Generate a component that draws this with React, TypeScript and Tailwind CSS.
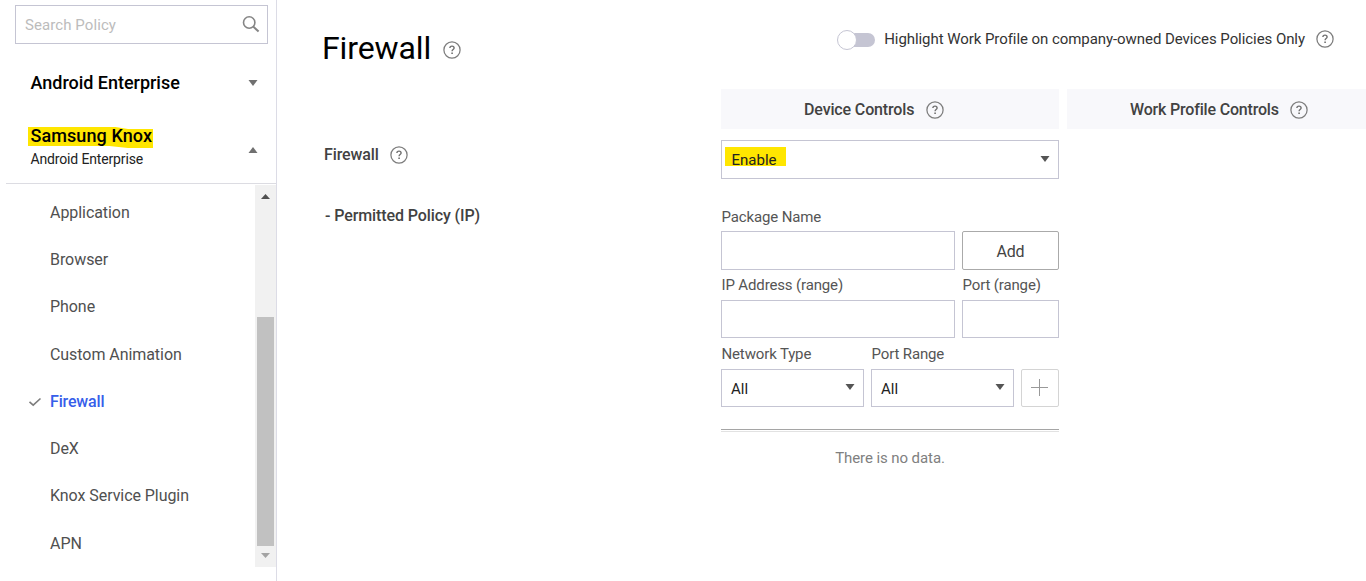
import React from 'react';

function HelpIcon() {
  return (
    <svg className="block shrink-0" width="18" height="18" viewBox="0 0 18 18" fill="none">
      <circle cx="9" cy="9" r="8.1" stroke="#7d7d7d" strokeWidth="1.25" />
      <path d="M6.9 7.1C6.9 5.8 7.7 5.1 9 5.1s2.1.8 2.1 1.9c0 1.5-2 1.6-2 3.2" stroke="#707070" strokeWidth="1.4" />
      <path d="M8.3 11.5h1.6V13H8.3z" fill="#707070" />
    </svg>
  );
}

function Arrow({ up = false, color = '#555' }: { up?: boolean; color?: string }) {
  return (
    <svg className="block shrink-0" width="10" height="6" viewBox="0 0 10 6">
      <path d={up ? 'M5 0L9.5 6H.5z' : 'M.5 0h9L5 6z'} fill={color} />
    </svg>
  );
}

const items = ['Application', 'Browser', 'Phone', 'Custom Animation', 'Firewall', 'DeX', 'Knox Service Plugin', 'APN'];

function Sidebar() {
  return (
    <aside className="flex h-full w-[277px] shrink-0 flex-col border-r border-[#dcdce6]">
      <div className="ml-[15px] mt-[5px] flex h-[39px] w-[253px] items-center justify-between border border-[#c5c5d3] pl-[9px] pr-[7px]">
        <span className="text-[15px] leading-5 tracking-[0.08px] text-[#bcbcbc]">Search Policy</span>
        <svg className="-mt-[2px] block" width="18" height="18" viewBox="0 0 18 18" fill="none" stroke="#858585" strokeWidth="1.6">
          <circle cx="7.2" cy="7.5" r="5.7" />
          <path d="M11.2 11.5L16.6 16.6" strokeWidth="2" />
        </svg>
      </div>
      <div className="mt-[27px] flex h-6 items-center justify-between pl-[30.5px] pr-[18px]">
        <span className="text-[18px] font-medium leading-6 tracking-[-0.02px] text-black">Android Enterprise</span>
        <Arrow color="#707070" />
      </div>
      <div className="ml-[6px] mt-[32px] flex h-[57px] items-start justify-between border-b border-[#dcdce2] pl-[22px] pr-[18px]">
        <div>
          <div className="flex h-[21px] w-[125px] items-center bg-[#ffe600] pl-[2.5px] text-[18px] font-medium leading-5 tracking-[0.08px] text-black [clip-path:polygon(0_0,70%_0,80%_2px,100%_2px,100%_100%,80%_100%,65%_19px,0_19px)]">
            <span className="-mt-[3px] whitespace-nowrap">Samsung Knox</span>
          </div>
          <div className="mt-[2px] whitespace-nowrap pl-[2.5px] text-[14px] leading-[18px] tracking-[-0.15px] text-[#222]">Android Enterprise</div>
        </div>
        <div className="mt-5"><Arrow up color="#707070" /></div>
      </div>
      <div className="mt-px flex h-[382px]">
        <ul className="mt-[4px] grow">
          {items.map((item) => (
            <li key={item} className="flex h-[47.3px] items-center">
              <span className="flex w-[50px] pl-[28px]">
                {item === 'Firewall' && (
                  <svg className="mt-px" width="14" height="10" viewBox="0 0 14 10" fill="none" stroke="#7d7d7d" strokeWidth="1.6">
                    <path d="M1.5 4.8l3.7 3.4L12.5 1.5" />
                  </svg>
                )}
              </span>
              <span className={`text-[16px] leading-5 ${item === 'Firewall' ? 'font-medium tracking-[-0.15px] text-[#365eea]' : 'tracking-[-0.06px] text-[#505050]'}`}>{item}</span>
            </li>
          ))}
        </ul>
        <div className="flex w-[21px] flex-col items-center bg-[#f1f1f1] pt-[9px]">
          <svg width="9" height="5" viewBox="0 0 9 5"><path d="M4.5 0L9 5H0z" fill="#505050" /></svg>
          <div className="mt-[118px] h-[229px] w-[17px] bg-[#c1c1c1]" />
          <svg className="mt-[7px]" width="9" height="5" viewBox="0 0 9 5"><path d="M0 0h9L4.5 5z" fill="#a3a3a3" /></svg>
        </div>
      </div>
    </aside>
  );
}

function FieldLabel({ children, width }: { children: React.ReactNode; width: string }) {
  return <span className={`block pl-[0.5px] text-[15px] leading-5 tracking-[-0.14px] text-[#555] ${width}`}>{children}</span>;
}

function SmallSelect() {
  return (
    <div className="flex h-[38px] w-[143px] items-center justify-between border border-[#c5c5d3] pl-[9px] pr-[8px]">
      <span className="mt-[2px] text-[15px] leading-5 text-[#222]">All</span>
      <div className="-mt-[2px]"><Arrow /></div>
    </div>
  );
}

function PolicyForm() {
  return (
    <div className="w-[338px] shrink-0">
      <div className="flex h-[39px] items-start justify-between border border-[#c5c5d3] pl-[2.5px] pr-[8px]">
        <span className="mt-[6px] flex h-[19px] w-[61.5px] bg-[#ffe600] pl-[7px] text-[15px] leading-5 text-[#222]">
          <span className="mt-[3px]">Enable</span>
        </span>
        <div className="mt-[15px]"><Arrow /></div>
      </div>
      <div className="mt-[28px]"><FieldLabel width="w-[234px]">Package Name</FieldLabel></div>
      <div className="mt-[4px] flex gap-[7px]">
        <div className="h-[39px] w-[234px] border border-[#c5c5d3]" />
        <button className="h-[39px] w-[97px] rounded-[2px] border border-[#aaa] pt-[2px] text-[16px] leading-5 tracking-[-0.2px] text-[#444]">Add</button>
      </div>
      <div className="mt-[5px] flex gap-[7px]">
        <FieldLabel width="w-[234px]">IP Address (range)</FieldLabel>
        <FieldLabel width="w-[97px]">Port (range)</FieldLabel>
      </div>
      <div className="mt-[5px] flex gap-[7px]">
        <div className="h-[38px] w-[234px] border border-[#c5c5d3]" />
        <div className="h-[38px] w-[97px] border border-[#c5c5d3]" />
      </div>
      <div className="mt-[6px] flex gap-[7px]">
        <FieldLabel width="w-[143px]">Network Type</FieldLabel>
        <FieldLabel width="w-[143px]">Port Range</FieldLabel>
      </div>
      <div className="mt-[5px] flex gap-[7px]">
        <SmallSelect />
        <SmallSelect />
        <button className="flex h-[38px] w-[38px] items-center justify-center rounded-[2px] border border-[#d4d4d4]">
          <svg className="block" width="18" height="18" viewBox="0 0 18 18" stroke="#999" strokeWidth="1">
            <path d="M8.5 0v17M0 8.5h17" />
          </svg>
        </button>
      </div>
      <div className="mt-[22px] h-[3px] border-b border-t border-b-[#e2e2e2] border-t-[#a5a5a5]" />
      <div className="mt-[16px] text-center text-[15px] leading-5 tracking-[-0.08px] text-[#808080]">There is no data.</div>
    </div>
  );
}

export default function App() {
  return (
    <div className="flex h-[581px] w-[1366px] overflow-hidden bg-white font-['Roboto',sans-serif]">
      <Sidebar />
      <main className="flex min-w-0 grow flex-col pl-[45px]">
        <div className="flex h-[89px] shrink-0 items-start justify-between pr-8">
          <div className="flex items-center gap-[12px] pt-7">
            <h1 className="text-[32px] font-normal leading-10 tracking-[-0.12px] text-black">Firewall</h1>
            <div className="mt-[4px]"><HelpIcon /></div>
          </div>
          <div className="flex items-center pt-[29px]">
            <div className="flex h-5 w-[38px] items-center">
              <div className="z-10 mt-px h-5 w-5 shrink-0 rounded-full border border-[#c5c5d3] bg-white" />
              <div className="-ml-3 mt-px h-[14px] w-[30px] rounded-full bg-[#c5c5d3]" />
            </div>
            <span className="ml-[9.5px] whitespace-nowrap text-[15px] leading-5 tracking-[-0.063px] text-[#333]">Highlight Work Profile on company-owned Devices Policies Only</span>
            <div className="ml-[11px]"><HelpIcon /></div>
          </div>
        </div>
        <div className="flex pl-[399px]">
          <div className="flex h-10 w-[338px] shrink-0 items-center gap-3 bg-[#f8f8fb] pl-[83px] pt-px text-[16px] font-medium leading-5 tracking-[-0.14px] text-[#424242]">
            <span className="whitespace-nowrap">Device Controls</span><HelpIcon />
          </div>
          <div className="ml-2 flex h-10 grow items-center gap-[11px] bg-[#f8f8fb] pl-[63px] pt-px text-[16px] font-medium leading-5 tracking-[-0.18px] text-[#424242]">
            <span className="whitespace-nowrap">Work Profile Controls</span><HelpIcon />
          </div>
        </div>
        <div className="mt-[11px] flex">
          <div className="w-[399px] shrink-0 pl-[2px] text-[16px] font-medium leading-5 tracking-[-0.1px] text-[#424242]">
            <div className="mt-[5px] flex items-center gap-[11px]"><span>Firewall</span><HelpIcon /></div>
            <div className="mt-[41px] pl-[1px]">- Permitted Policy (IP)</div>
          </div>
          <PolicyForm />
        </div>
      </main>
    </div>
  );
}
